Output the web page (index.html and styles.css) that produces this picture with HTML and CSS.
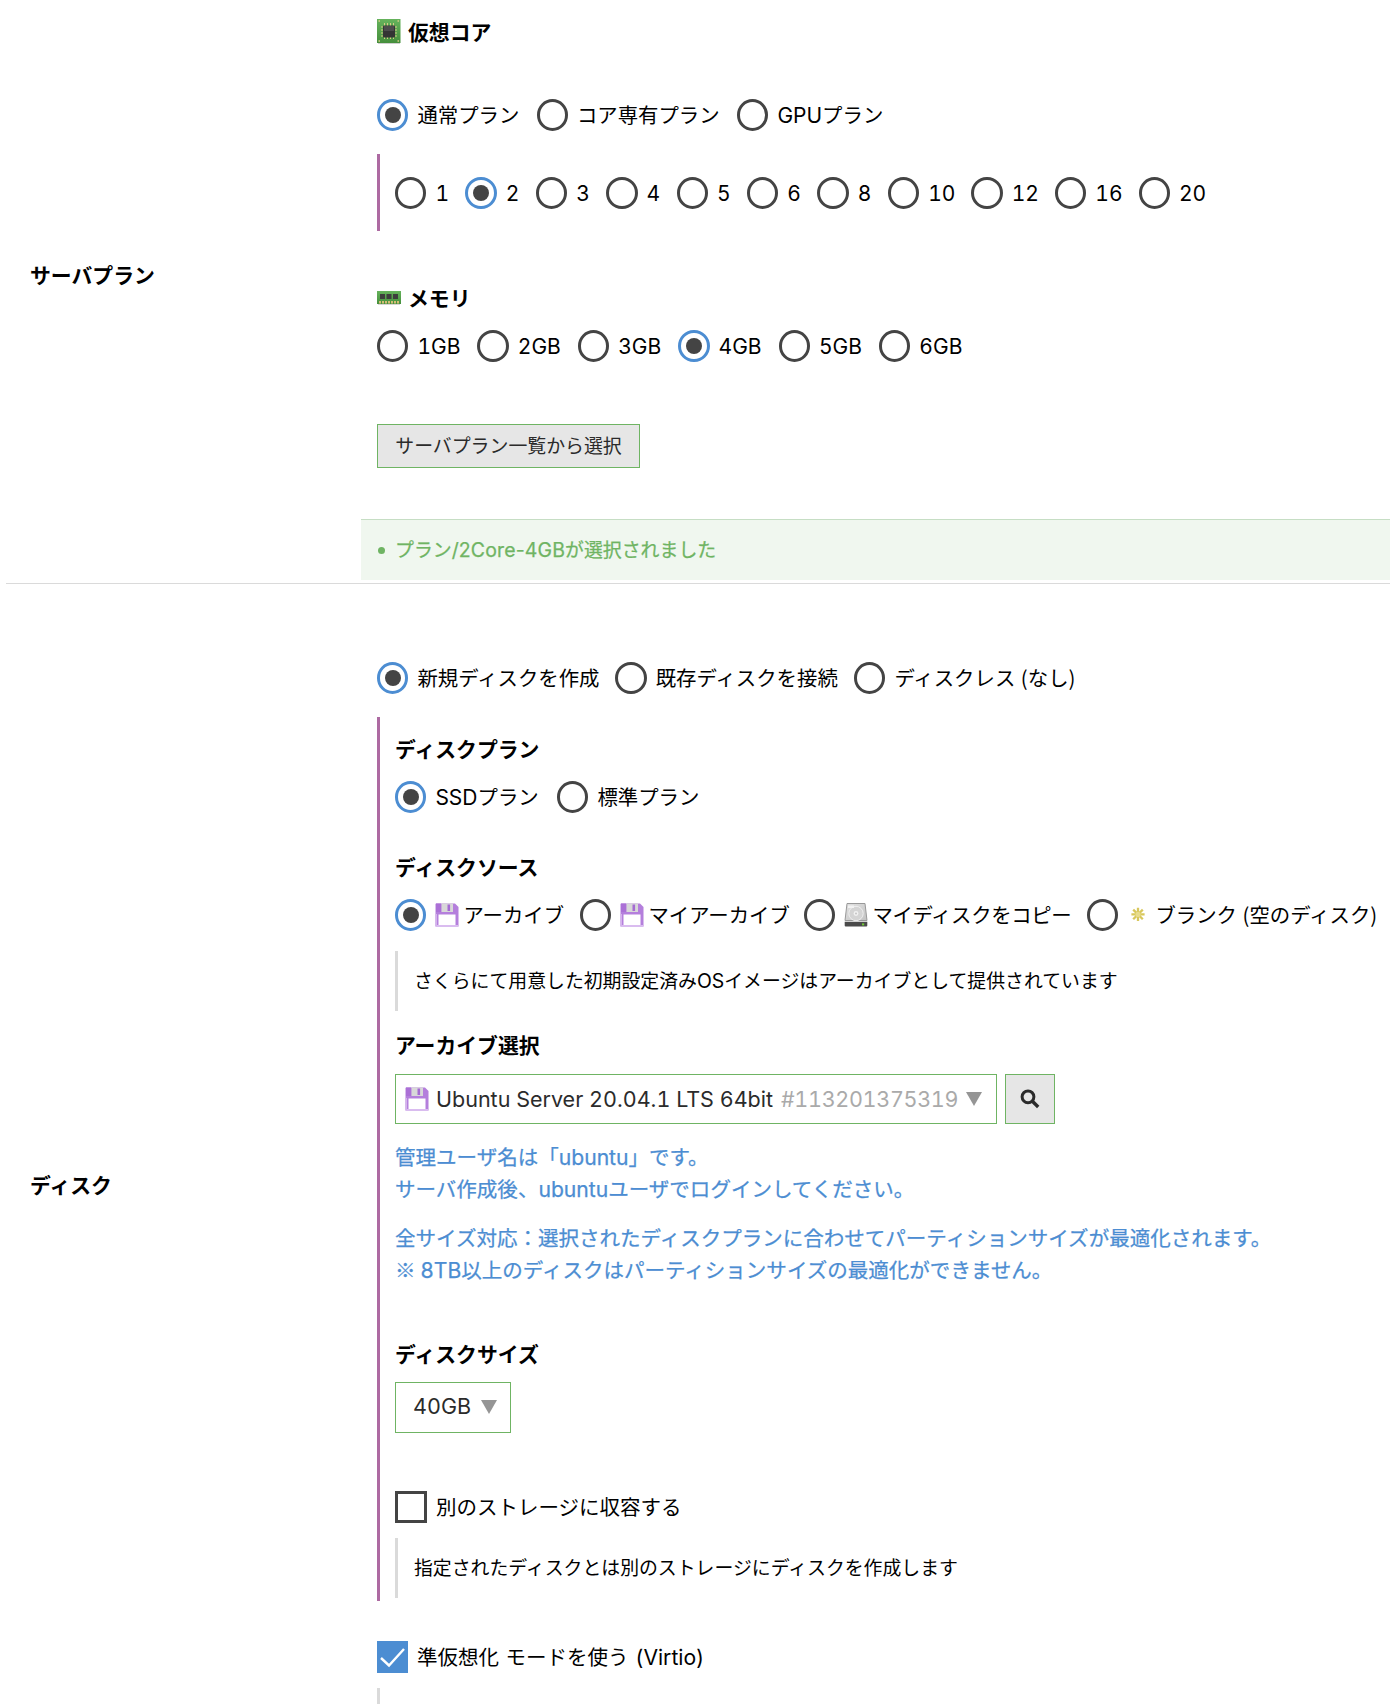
FILE: index.html
```html
<!DOCTYPE html>
<html lang="ja">
<head>
<meta charset="utf-8">
<title>サーバ作成</title>
<link rel="stylesheet" href="styles.css">
</head>
<body>
<svg width="0" height="0" class="defs" aria-hidden="true">
  <defs>
    <linearGradient id="pcb" x1="0" y1="0" x2="0" y2="1"><stop offset="0" stop-color="#66b35c"/><stop offset="1" stop-color="#458f3c"/></linearGradient>
    <linearGradient id="disk" x1="0" y1="0" x2="1" y2="1"><stop offset="0" stop-color="#e2e2e2"/><stop offset="1" stop-color="#c2c2c2"/></linearGradient>
  </defs>
  <symbol id="floppy" viewBox="0 0 24 24">
    <path d="M1 .5H20L23.5 4V23.5H.5V1Z" fill="#b47fdc"/>
    <path d="M1 .5H6V9H1Z" fill="#ab70d6"/>
    <rect x="6.5" y=".5" width="11.5" height="8.5" fill="#d8d8d8"/>
    <rect x="12.5" y="1.5" width="2.6" height="6.5" fill="#a56bd3"/>
    <rect x="3.5" y="11.5" width="17" height="11" fill="#fff"/>
    <rect x=".5" y="22" width="23" height="1.6" fill="#dabcf0"/>
    <rect x=".5" y="11" width="1.5" height="12" fill="#d4b2ec"/>
  </symbol>
</svg>
<main class="form">
  <section class="row row--plan">
    <h2 class="row__label">サーバプラン</h2>
    <div class="row__body">
      <h3 class="head head--core">
        <svg class="icon" viewBox="0 0 24 26">
          <rect x="1" y="23" width="22" height="2" fill="#cfcfcf"/>
          <rect width="23.5" height="24" fill="url(#pcb)"/>
          <path d="M7.5 4v16M10.5 4v16M13.5 4v16M16.5 4v16M4 8h16M4 11h16M4 14h16M4 17h16" stroke="#d6cc85" stroke-width="1"/>
          <rect x="6" y="6.5" width="12" height="12" rx="1" fill="#343434"/>
          <rect x="7" y="7" width="10" height="5" fill="#4c4c4c"/>
          <path d="M1.5 2h1.5M20.5 2H22M1.5 22H3M20.5 22H22" stroke="#d6cc85" stroke-width="1.5"/>
        </svg>
        仮想コア
      </h3>
      <div class="choices choices--type">
        <label class="choice"><i class="radio radio--on"></i>通常プラン</label>
        <label class="choice"><i class="radio"></i>コア専有プラン</label>
        <label class="choice"><i class="radio"></i><span><b class="lat">GPU</b>プラン</span></label>
      </div>
      <div class="group group--cores">
        <div class="choices choices--cores">
          <label class="choice"><i class="radio"></i><b class="lat">1</b></label>
          <label class="choice"><i class="radio radio--on"></i><b class="lat">2</b></label>
          <label class="choice"><i class="radio"></i><b class="lat">3</b></label>
          <label class="choice"><i class="radio"></i><b class="lat">4</b></label>
          <label class="choice"><i class="radio"></i><b class="lat">5</b></label>
          <label class="choice"><i class="radio"></i><b class="lat">6</b></label>
          <label class="choice"><i class="radio"></i><b class="lat">8</b></label>
          <label class="choice"><i class="radio"></i><b class="lat">10</b></label>
          <label class="choice"><i class="radio"></i><b class="lat">12</b></label>
          <label class="choice"><i class="radio"></i><b class="lat">16</b></label>
          <label class="choice"><i class="radio"></i><b class="lat">20</b></label>
        </div>
      </div>
      <h3 class="head head--memory">
        <svg class="icon icon--memory" viewBox="0 0 24 14">
          <rect x="1" y="12.5" width="22" height="1.5" fill="#d6d6d6"/>
          <rect width="24" height="13" fill="url(#pcb)"/>
          <path d="M3 3h5v5H3zM9.5 3h5v5h-5zM16 3h5v5h-5z" fill="#3d3d3d"/>
          <path d="M2 11.2h20" stroke="#d3bd74" stroke-width="2.5" stroke-dasharray="2 1"/>
        </svg>
        メモリ
      </h3>
      <div class="choices choices--memory">
        <label class="choice"><i class="radio"></i><b class="lat">1GB</b></label>
        <label class="choice"><i class="radio"></i><b class="lat">2GB</b></label>
        <label class="choice"><i class="radio"></i><b class="lat">3GB</b></label>
        <label class="choice"><i class="radio radio--on"></i><b class="lat">4GB</b></label>
        <label class="choice"><i class="radio"></i><b class="lat">5GB</b></label>
        <label class="choice"><i class="radio"></i><b class="lat">6GB</b></label>
      </div>
      <button class="button">サーバプラン一覧から選択</button>
      <div class="notice"><i class="notice__dot"></i><span class="notice__text">プラン<b class="lat">/2Core-4GB</b>が選択されました</span></div>
    </div>
  </section>

  <section class="row row--disk">
    <h2 class="row__label">ディスク</h2>
    <div class="row__body">
      <div class="choices choices--disk">
        <label class="choice"><i class="radio radio--on"></i>新規ディスクを作成</label>
        <label class="choice"><i class="radio"></i>既存ディスクを接続</label>
        <label class="choice"><i class="radio"></i>ディスクレス (なし)</label>
      </div>
      <div class="group group--disk">
        <h3 class="head">ディスクプラン</h3>
        <div class="choices choices--diskplan">
          <label class="choice"><i class="radio radio--on"></i><span><b class="lat">SSD</b>プラン</span></label>
          <label class="choice"><i class="radio"></i>標準プラン</label>
        </div>
        <h3 class="head head--source">ディスクソース</h3>
        <div class="choices choices--source">
          <label class="choice"><i class="radio radio--on"></i><svg class="glyph"><use href="#floppy"/></svg>アーカイブ</label>
          <label class="choice"><i class="radio"></i><svg class="glyph"><use href="#floppy"/></svg>マイアーカイブ</label>
          <label class="choice choice--copy"><i class="radio"></i><svg class="glyph" viewBox="0 0 24 24">
              <path d="M3 .5H21L23 17.5H1Z" fill="url(#disk)" stroke="#999" stroke-width="1"/>
              <circle cx="12" cy="10.5" r="7.2" fill="#d4d4d4" stroke="#efefef"/>
              <circle cx="12" cy="10.5" r="2.4" fill="#f1f1f1"/><circle cx="12" cy="10.5" r="1" fill="#c4c4c4"/>
              <path d="M4 2.5h6v2.5H4z" fill="#f2f2f2"/>
              <path d="M.7 18.8H23.3V22.5Q23.3 23.5 22.3 23.5H1.7Q.7 23.5.7 22.5Z" fill="#4a4a4a"/>
              <rect x="18" y="20.4" width="2.2" height="2" fill="#71c837"/>
            </svg>マイディスクをコピー</label>
          <label class="choice choice--blank"><i class="radio"></i><svg class="glyph" viewBox="0 0 24 24">
              <path d="M12 4.8V18M5.4 11.4H18.6M7.2 6.6L16.8 16.2M16.8 6.6L7.2 16.2" stroke="#d8c75c" stroke-width="2.3"/>
              <circle cx="12" cy="11.4" r="2.6" fill="#e8dc8c"/>
            </svg>ブランク (空のディスク)</label>
        </div>
        <p class="hint hint--source"><span>さくらにて用意した初期設定済み<b class="lat">OS</b>イメージはアーカイブとして提供されています</span></p>
        <h3 class="head head--archive">アーカイブ選択</h3>
        <div class="picker">
          <div class="select select--archive"><svg class="glyph"><use href="#floppy"/></svg><b class="lat select__name">Ubuntu Server 20.04.1 LTS 64bit</b><b class="lat select__id">#113201375319</b><i class="arrow"></i></div>
          <button class="search" aria-label="検索"><svg viewBox="0 0 20 20"><circle cx="8" cy="7.8" r="5.9" fill="none" stroke="#2b2b2b" stroke-width="3"/><path d="M12.4 12.2L18.2 18" stroke="#2b2b2b" stroke-width="3.4"/></svg></button>
        </div>
        <div class="info">
          <p class="info__para">管理ユーザ名は「<b class="lat">ubuntu</b>」です。<br>サーバ作成後、<b class="lat">ubuntu</b>ユーザでログインしてください。</p>
          <p class="info__para">全サイズ対応：選択されたディスクプランに合わせてパーティションサイズが最適化されます。<br>※ <b class="lat">8TB</b>以上のディスクはパーティションサイズの最適化ができません。</p>
        </div>
        <h3 class="head head--size">ディスクサイズ</h3>
        <div class="select select--size"><b class="lat">40GB</b><i class="arrow"></i></div>
        <label class="choice choice--storage"><i class="check"></i>別のストレージに収容する</label>
        <p class="hint hint--storage">指定されたディスクとは別のストレージにディスクを作成します</p>
      </div>
      <label class="choice choice--virtio"><i class="check check--on"><svg viewBox="0 0 31 32"><path d="M4 17L12 24.5L27 8" fill="none" stroke="#fff" stroke-width="2.4"/></svg></i><span>準仮想化 モードを使う <b class="lat">(Virtio)</b></span></label>
      <p class="hint hint--virtio"></p>
    </div>
  </section>
</main>
</body>
</html>
```
FILE: styles.css
```css
* { box-sizing: border-box; }
html, body { margin: 0; padding: 0; }
body {
  width: 1390px;
  height: 1704px;
  overflow: hidden;
  background: #fff;
  color: #000;
  font: 20.4px/32px "Noto Sans CJK JP", sans-serif;
  white-space: nowrap;
}
h2, h3, p { margin: 0; font-size: 20.4px; line-height: 32px; }
h2, h3 { font-size: 20.85px; }
i { font-style: normal; }
.defs { display: block; height: 0; }

.lat {
  font-family: Inter, "Noto Sans CJK JP", sans-serif;
  font-weight: 400;
  font-size: 1.03em;
  line-height: 1;
  font-feature-settings: "tnum";
}

.form { padding-left: 6px; }
.row { display: flex; align-items: center; }
.row--plan { height: 584px; border-bottom: 1px solid #dadada; }
.row--disk { height: 1202px; align-items: flex-start; }
.row__label { width: 371px; padding-left: 24px; flex: none; }
.row--plan .row__label { padding-bottom: 35px; }
.row--disk .row__label { padding-top: 584px; }
.row__body { flex: 1; display: flex; flex-direction: column; align-items: flex-start; align-self: flex-start; }

.head { display: flex; align-items: center; gap: 7px; height: 32px; padding-bottom: 2px; font-weight: 700; }
.icon { width: 24px; height: 26px; flex: none; margin-top: 2px; }
.icon--memory { height: 14px; }
.head--core { margin-top: 16px; }
.head--memory { margin-top: 51px; }

.choices { display: grid; }
.choice { display: flex; align-items: flex-start; height: 32px; line-height: 30px; }
.choice > .lat { line-height: 33px; }
.choices--type { margin-top: 51px; grid-template-columns: 159.5px 200.5px auto; }
.choices--cores { grid-template-columns: repeat(7, 70.4px) repeat(3, 83.6px) auto; }
.choices--memory { margin-top: 16px; grid-template-columns: repeat(5, 100.4px) auto; }
.choices--disk { margin-top: 78px; grid-template-columns: 238.3px 238.7px auto; word-spacing: 1px; }
.choices--diskplan { margin-top: 16px; grid-template-columns: 162px auto; }
.choices--source { margin-top: 16px; grid-template-columns: 185px 224px 283px auto; }

.radio, .check {
  display: grid;
  place-items: center;
  flex: none;
  width: 32px;
  height: 32px;
  margin-right: 9px;
  border: 3px solid #444;
}
.radio { width: 31.4px; border-radius: 50%; }
.radio--on { border-color: #4c8dd2; }
.radio--on::after { content: ""; width: 16px; height: 16px; border-radius: 50%; background: #444; }
.check--on { width: 31px; border: 0; background: #4c8dd2; }

.group { border-left: 3px solid #ad6aa2; padding-left: 15px; }
.group--cores { margin-top: 23px; height: 77px; padding-top: 23px; }
.group--disk { margin-top: 23px; height: 884px; padding-top: 16px; }

.button {
  margin-top: 62px;
  width: 263px;
  height: 44px;
  padding: 0 0 2px;
  border: 1px solid #6fb463;
  background: #e6e6e6;
  color: #2b2b2b;
  font: 18.9px/40px "Noto Sans CJK JP", sans-serif;
}
.notice {
  display: flex;
  align-items: center;
  align-self: stretch;
  margin: 51px 0 0 -16px;
  height: 61px;
  padding-left: 17px;
  border-top: 1px solid #c6dec4;
  background: #f0f7ef;
  color: #6fb463;
  font-size: 18.9px;
  -webkit-text-stroke: .25px #6fb463;
}
.notice__dot { width: 7px; height: 7px; margin: 1px 10px 0 0; border-radius: 50%; background: #6fb463; }
.notice__text { padding-bottom: 2px; }
.notice .lat { font-feature-settings: normal; letter-spacing: .15px; }

.glyph { width: 24px; height: 24px; flex: none; margin-right: 4px; }
.choice .glyph { margin-top: 4px; }
.choice--copy { letter-spacing: -.35px; }
.choice--blank .glyph { margin-left: -1px; margin-right: 5px; }
.choice--blank { word-spacing: 1px; }
.head--source { margin-top: 38px; }

.hint { display: flex; align-items: center; height: 60px; padding-bottom: 2px; border-left: 3px solid #dadada; padding-left: 16px; font-size: 18.87px; }
.hint--source { margin-top: 20px; }
.head--archive { margin-top: 18px; }

.picker { display: flex; gap: 8px; margin-top: 13px; }
.select { display: flex; align-items: center; height: 50px; border: 1px solid #6fb463; color: #2b2b2b; font-size: 20.9px; }
.select--archive { width: 602px; padding-left: 9px; }
.select--archive .glyph { margin-right: 7px; }
.select__name { width: 345px; padding-top: 1px; }
.select__id { width: 185px; padding-top: 1px; color: #aaa; letter-spacing: -.3px; }
.arrow { border: 8px solid transparent; border-top: 14px solid #959595; border-bottom: 0; }
.search { display: grid; place-items: center; width: 50px; height: 50px; padding: 0; border: 1px solid #6fb463; background: #e6e6e6; }
.search svg { width: 20px; height: 20px; }

.info { margin-top: 16px; color: #4c8dd2; -webkit-text-stroke: .25px #4c8dd2; }
.info__para { font-size: 20.52px; line-height: 32.4px; }
.info__para + .info__para { margin-top: 16px; }
.head--size { margin-top: 52px; }
.select--size { width: 116px; height: 51px; margin-top: 12px; padding-left: 17px; }
.select--size .lat { width: 68px; }
.choice--storage { margin-top: 58px; font-size: 20.5px; }
.hint--storage { margin-top: 15px; }
.choice--virtio { margin-top: 40px; font-size: 20.5px; word-spacing: 2px; }
.hint--virtio { margin-top: 15px; }
```
